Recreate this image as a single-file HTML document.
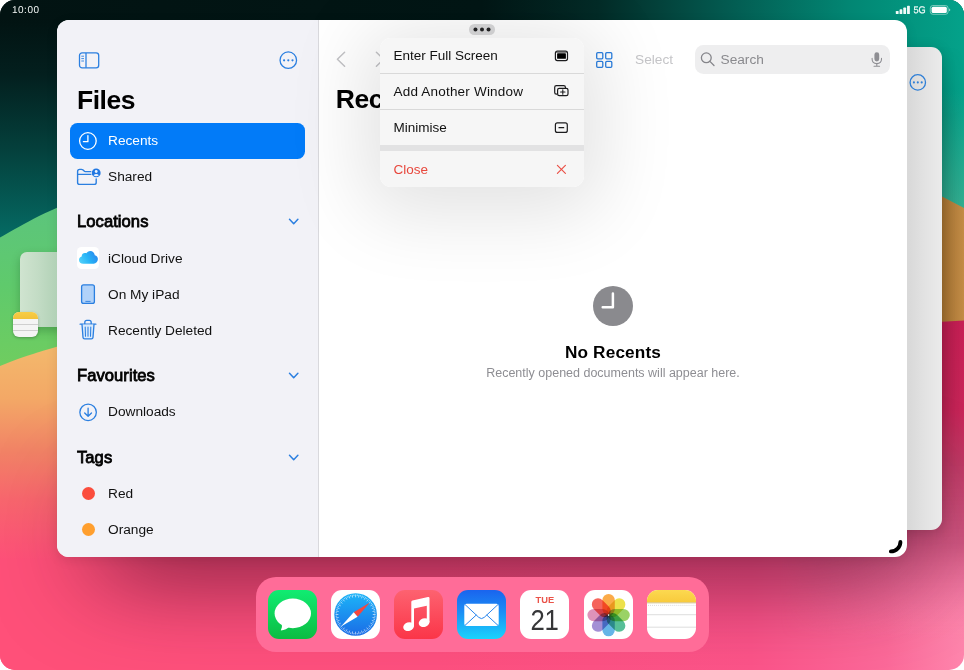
<!DOCTYPE html>
<html lang="en">
<head>
<meta charset="utf-8">
<title>Files</title>
<style>
html,body{margin:0;padding:0;background:#fff;}
body{width:964px;height:670px;overflow:hidden;font-family:"Liberation Sans",sans-serif;}
#screen{position:absolute;left:0;top:0;width:964px;height:670px;border-radius:15px;overflow:hidden;}
.abs{position:absolute;}
.t{position:absolute;white-space:nowrap;line-height:1;}
#wall{position:absolute;left:0;top:0;}
/* status */
#time{left:12.3px;top:4.8px;font-size:10px;color:#f2f6f5;letter-spacing:0.5px;transform:rotate(0.03deg);}
/* windows */
#backL{left:20px;top:252px;width:60px;height:75px;border-radius:7px 0 0 7px;background:linear-gradient(90deg,#d0e4d0 0px,#c3dcc5 18px,#b1d1b6 37px);box-shadow:0 4px 10px rgba(0,45,10,0.26);}
#backR{left:860px;top:46.5px;width:82px;height:483.5px;border-radius:11px;background:linear-gradient(90deg,#d6d6d6 0px,#d9d9d9 49px,#e2e2e2 64px,#ebebeb 82px);box-shadow:0 3px 14px rgba(0,0,0,0.18);}
#win{left:57px;top:19.5px;width:850px;height:537.5px;border-radius:12px;background:#fff;}
#winshadow{left:57px;top:19.5px;width:850px;height:537.5px;border-radius:12px;box-shadow:0 3px 12px rgba(30,0,15,0.10);}
#winclip{position:absolute;left:0;top:0;width:100%;height:100%;border-radius:12px;overflow:hidden;}
#side{left:0;top:0;width:261px;height:100%;background:#f2f2f7;}
#sep{left:261px;top:0;width:1px;height:100%;background:#d9d9dd;}
.row{position:absolute;left:51px;font-size:13.7px;color:#111;white-space:nowrap;line-height:1;}
.hd{position:absolute;left:20px;font-size:16.6px;font-weight:normal;color:#000;-webkit-text-stroke:0.8px #000;white-space:nowrap;line-height:1;letter-spacing:0.05px;}
/* menu */
#menu{left:323px;top:18.05px;width:204px;height:149px;border-radius:11px;background:#f6f6f6;overflow:hidden;}
#menushadow{left:323px;top:18.05px;width:204px;height:149px;border-radius:11px;box-shadow:0 10px 78px 16px rgba(0,0,0,0.118);}
.mi{position:absolute;left:13.5px;font-size:13.5px;color:#111;white-space:nowrap;line-height:1;}
.ml{position:absolute;left:0;width:204px;height:1px;background:#d9d9d9;}
/* dock */
#dock{left:255.8px;top:577px;width:452.8px;height:75.2px;border-radius:20px;background:#ff6c98;}
.ic{position:absolute;top:590.5px;width:48.5px;height:48.5px;border-radius:11px;overflow:hidden;}
</style>
</head>
<body>
<div id="screen">
<!-- WALLPAPER -->
<svg id="wall" width="964" height="670" viewBox="0 0 964 670">
<defs>
<linearGradient id="gTop" gradientUnits="userSpaceOnUse" x1="0" y1="0" x2="964" y2="0">
<stop offset="0" stop-color="#021312"/><stop offset="0.5" stop-color="#021615"/><stop offset="0.62" stop-color="#032b27"/><stop offset="0.75" stop-color="#03594f"/><stop offset="0.88" stop-color="#028673"/><stop offset="0.913" stop-color="#028e79"/><stop offset="1" stop-color="#04a28a"/>
</linearGradient>
<linearGradient id="gLeft" gradientUnits="userSpaceOnUse" x1="0" y1="19" x2="0" y2="240">
<stop offset="0" stop-color="#021312"/><stop offset="0.25" stop-color="#031f1e"/><stop offset="0.6" stop-color="#04413d"/><stop offset="1" stop-color="#056c65"/>
</linearGradient>
<linearGradient id="gGreen" gradientUnits="userSpaceOnUse" x1="0" y1="200" x2="0" y2="370">
<stop offset="0" stop-color="#5cc47e"/><stop offset="0.5" stop-color="#5fca6c"/><stop offset="1" stop-color="#70cd5f"/>
</linearGradient>
<linearGradient id="gOrange" gradientUnits="userSpaceOnUse" x1="0" y1="345" x2="0" y2="560">
<stop offset="0" stop-color="#f3b96c"/><stop offset="0.25" stop-color="#f3a866"/><stop offset="0.5" stop-color="#f28266"/><stop offset="0.72" stop-color="#f9666e"/><stop offset="1" stop-color="#ff5079"/>
</linearGradient>
<linearGradient id="gBottom" gradientUnits="userSpaceOnUse" x1="0" y1="0" x2="964" y2="0">
<stop offset="0" stop-color="#ff5079"/><stop offset="0.45" stop-color="#ff5080"/><stop offset="0.78" stop-color="#fd548a"/><stop offset="0.92" stop-color="#fd6a9a"/><stop offset="1" stop-color="#ff86ad"/>
</linearGradient>
<linearGradient id="gRightO" gradientUnits="userSpaceOnUse" x1="907" y1="0" x2="964" y2="0">
<stop offset="0" stop-color="#a56e30"/><stop offset="0.6" stop-color="#b57d36"/><stop offset="1" stop-color="#c48d47"/>
</linearGradient>
<linearGradient id="gRightC" gradientUnits="userSpaceOnUse" x1="0" y1="320" x2="0" y2="640">
<stop offset="0" stop-color="#c81f55"/><stop offset="0.28" stop-color="#ca2559"/><stop offset="0.45" stop-color="#c03a66"/><stop offset="0.7" stop-color="#cf5580" stop-opacity="0.92"/><stop offset="0.85" stop-color="#e86c98" stop-opacity="0.5"/><stop offset="1" stop-color="#ff88ae" stop-opacity="0"/>
</linearGradient>
<linearGradient id="gRightT" gradientUnits="userSpaceOnUse" x1="880" y1="0" x2="964" y2="0">
<stop offset="0" stop-color="#028e79"/><stop offset="1" stop-color="#04a28a"/>
</linearGradient>
<linearGradient id="gRightT2" gradientUnits="userSpaceOnUse" x1="0" y1="90" x2="0" y2="212">
<stop offset="0" stop-color="#4fb796" stop-opacity="0"/><stop offset="1" stop-color="#4fb796" stop-opacity="0.650"/>
</linearGradient>
<linearGradient id="gRShade" gradientUnits="userSpaceOnUse" x1="936" y1="0" x2="964" y2="0">
<stop offset="0" stop-color="#000" stop-opacity="0.170"/><stop offset="1" stop-color="#000" stop-opacity="0"/>
</linearGradient>
<linearGradient id="mVg" gradientUnits="userSpaceOnUse" x1="0" y1="46" x2="0" y2="540">
<stop offset="0" stop-color="#fff" stop-opacity="0"/><stop offset="0.14" stop-color="#fff" stop-opacity="1"/><stop offset="0.7" stop-color="#fff" stop-opacity="1"/><stop offset="1" stop-color="#fff" stop-opacity="0"/>
</linearGradient>
<mask id="mV" maskUnits="userSpaceOnUse" x="890" y="0" width="80" height="560"><rect x="890" y="0" width="80" height="560" fill="url(#mVg)"/></mask>
<linearGradient id="mH" gradientUnits="userSpaceOnUse" x1="780" y1="0" x2="915" y2="0">
<stop offset="0" stop-color="#fff" stop-opacity="0"/><stop offset="1" stop-color="#fff" stop-opacity="1"/>
</linearGradient>
<mask id="mR" maskUnits="userSpaceOnUse" x="700" y="300" width="264" height="370"><rect x="700" y="300" width="264" height="370" fill="url(#mH)"/></mask>
</defs>
<rect x="0" y="0" width="964" height="336" fill="#021312"/>
<rect x="0" y="335" width="964" height="335" fill="url(#gBottom)"/>
<!-- right strip -->
<rect x="880" y="0" width="84" height="215" fill="url(#gRightT)"/>
<rect x="880" y="90" width="84" height="125" fill="url(#gRightT2)"/>
<path d="M880 166 L942 196.500 L964 208 L964 322 L880 326Z" fill="url(#gRightO)"/>
<g mask="url(#mR)"><path d="M700 336 L964 320.500 L964 670 L700 670Z" fill="url(#gRightC)"/></g>
<g mask="url(#mV)"><rect x="936" y="19" width="28" height="521" fill="url(#gRShade)"/></g>
<!-- top strip -->
<rect x="0" y="0" width="964" height="30" fill="url(#gTop)"/>
<!-- left strip -->
<rect x="0" y="19" width="90" height="240" fill="url(#gLeft)"/>
<path d="M0 237.500 C20 226.500 40 213 90 194.500 L90 380 L0 380Z" fill="url(#gGreen)"/>
<path d="M0 366 C20 358 38 351 90 338 L90 670 L0 670Z" fill="url(#gOrange)"/>
</svg>

<!-- STATUS BAR -->
<div class="t" id="time">10:00</div>
<svg class="abs" style="left:895px;top:3px" width="60" height="14" viewBox="0 0 60 14">
<g fill="#f2fbf9">
<rect x="0.800" y="7.900" width="2.800" height="3.200" rx="0.700"/>
<rect x="4.550" y="6.300" width="2.800" height="4.800" rx="0.700"/>
<rect x="8.300" y="4.600" width="2.800" height="6.500" rx="0.700"/>
<rect x="12.050" y="2.800" width="2.800" height="8.300" rx="0.700"/>
</g>
<text transform="translate(18.500 10.250) rotate(0.030) scale(0.920 1)" x="0" y="0" font-family="Liberation Sans, sans-serif" font-size="10" fill="#eefaf7" stroke="#eefaf7" stroke-width="0.250">5G</text>
<rect x="35.300" y="2.500" width="17.800" height="8.800" rx="2.600" fill="none" stroke="#bfe6de" stroke-width="0.800" opacity="0.75"/>
<rect x="36.600" y="3.800" width="15.200" height="6.200" rx="1.500" fill="#ffffff"/>
<path d="M54 5.600 q1.300 0.400 1.300 1.300 q0 0.900 -1.300 1.300z" fill="#bfe6de" opacity="0.75"/>
</svg>

<div class="abs" style="left:281.700px;top:-1500px;width:448.600px;height:70px;border-radius:20px;transform:scaleX(1.830);transform-origin:50% 50%;box-shadow:0 2000px 72px rgba(50,0,26,0.78);"></div>
<div class="abs" id="winshadow"></div>
<!-- BACK WINDOWS -->
<div class="abs" id="backL"></div>
<div class="abs" id="backR"></div>
<svg class="abs" style="left:908px;top:72px" width="20" height="20" viewBox="0 0 20 20">
<circle cx="9.800" cy="10.400" r="7.700" fill="none" stroke="#2f7fd6" stroke-width="1.300"/>
<circle cx="5.900" cy="10.400" r="1.050" fill="#2f7fd6"/><circle cx="9.800" cy="10.400" r="1.050" fill="#2f7fd6"/><circle cx="13.700" cy="10.400" r="1.050" fill="#2f7fd6"/>
</svg>
<!-- notes mini icon -->
<div class="abs" id="notesMini" style="left:13.300px;top:312.300px;width:24.700px;height:24.700px;border-radius:6px;overflow:hidden;background:#f4f4f4;box-shadow:0 1px 3px rgba(0,0,0,0.25);">
<div class="abs" style="left:0;top:0;width:25px;height:6.500px;background:linear-gradient(#f7cd46,#f2c23a);"></div>
<div class="abs" style="left:0;top:12px;width:25px;height:0.800px;background:#cfcfcf;"></div>
<div class="abs" style="left:0;top:17.500px;width:25px;height:0.800px;background:#cfcfcf;"></div>
</div>

<!-- MAIN WINDOW -->
<div class="abs" id="win">
<div id="winclip">
<div class="abs" id="side"></div>
<div class="abs" id="sep"></div>

<!-- toolbar icons -->
<svg class="abs" style="left:20px;top:30px" width="26" height="22" viewBox="0 0 26 22">
<rect x="2.500" y="2.900" width="19.200" height="14.900" rx="2.600" fill="none" stroke="#2b7fe0" stroke-width="1.300"/>
<line x1="9" y1="3" x2="9" y2="17.700" stroke="#2b7fe0" stroke-width="1.300"/>
<g stroke="#2b7fe0" stroke-width="0.900"><line x1="4.300" y1="6.200" x2="7" y2="6.200"/><line x1="4.300" y1="8.600" x2="7" y2="8.600"/><line x1="4.300" y1="11" x2="7" y2="11"/></g>
</svg>
<svg class="abs" style="left:221px;top:30px" width="22" height="22" viewBox="0 0 22 22">
<circle cx="10.300" cy="10.200" r="8.250" fill="none" stroke="#2b7fe0" stroke-width="1.300"/>
<circle cx="6.100" cy="10.300" r="1.100" fill="#2b7fe0"/><circle cx="10.300" cy="10.300" r="1.100" fill="#2b7fe0"/><circle cx="14.500" cy="10.300" r="1.100" fill="#2b7fe0"/>
</svg>
<div class="t" style="left:20px;top:67px;font-size:26.500px;font-weight:bold;color:#000;letter-spacing:-0.500px;">Files</div>
<!-- selected row -->
<div class="abs" style="left:13px;top:103px;width:235.100px;height:36px;border-radius:7.500px;background:#027bf8;"></div>
<svg class="abs" style="left:20px;top:111px" width="22" height="22" viewBox="0 0 22 22">
<circle cx="10.900" cy="10" r="8.300" fill="none" stroke="#fff" stroke-width="1.300"/>
<path d="M10.900 4.600 V10.700 H6.400" fill="none" stroke="#fff" stroke-width="1.300" stroke-linecap="round" stroke-linejoin="round"/>
</svg>
<div class="row" style="top:114.4px;color:#fff;">Recents</div>
<!-- shared -->
<svg class="abs" style="left:18px;top:146.500px" width="28" height="22" viewBox="0 0 28 22">
<g fill="none" stroke="#2b7fe0" stroke-width="1.400" stroke-linejoin="round" stroke-linecap="round">
<path d="M15.800 5.600 H10.300 Q9.600 5.600 9.100 5.100 L8.100 4.100 Q7.400 3.400 6.400 3.400 H4.600 Q2.600 3.400 2.600 5.400 V16.400 Q2.600 18.400 4.600 18.400 H19.200 Q21.200 18.400 21.200 16.400 V13"/>
<line x1="2.800" y1="8.400" x2="15.800" y2="8.400"/>
</g>
<circle cx="21.200" cy="6.900" r="4.450" fill="#2278e2"/>
<circle cx="21.200" cy="5.500" r="1.400" fill="#eef4fd"/>
<path d="M18.500 9.300 Q21.200 6.500 23.900 9.300 Q21.200 11.400 18.500 9.300Z" fill="#eef4fd"/>
</svg>
<div class="row" style="top:150.4px;">Shared</div>
<!-- Locations -->
<div class="hd" style="top:194px;">Locations</div>
<svg class="abs chev" style="left:230px;top:196.6px" width="14" height="12" viewBox="0 0 14 12"><path d="M2.500 3.300 L6.700 7.700 L10.900 3.300" fill="none" stroke="#2b7fe0" stroke-width="1.500" stroke-linecap="round" stroke-linejoin="round"/></svg>
<!-- iCloud -->
<div class="abs" style="left:20px;top:227.400px;width:22.300px;height:22.300px;border-radius:4.500px;background:#fff;"></div>
<svg class="abs" style="left:20px;top:227.500px" width="23" height="23" viewBox="0 0 23 23">
<defs><linearGradient id="gCloud" x1="0" y1="0.7" x2="1" y2="0.3"><stop offset="0" stop-color="#4fcffa"/><stop offset="0.45" stop-color="#27b4f6"/><stop offset="1" stop-color="#2a86ee"/></linearGradient></defs>
<path d="M6.200 16.700 C3.700 16.700 2 15.100 2 13 C2 11.300 3.100 9.900 4.700 9.500 C4.600 7.500 6.100 6 7.900 6 C8.400 6 8.900 6.100 9.300 6.300 C10.100 4.800 11.600 3.900 13.200 3.900 C15.700 3.900 17.600 5.800 17.800 8.300 C19.600 8.500 20.900 10.100 20.900 12.100 C20.900 14.700 19 16.700 16.700 16.700 Z" fill="url(#gCloud)"/>
</svg>
<div class="row" style="top:232.6px;">iCloud Drive</div>
<!-- iPad -->
<svg class="abs" style="left:20px;top:262px" width="22" height="26" viewBox="0 0 22 26">
<rect x="4.600" y="2.800" width="12.800" height="18.600" rx="2" fill="#b1d2f9" stroke="#2b7fe0" stroke-width="1.300"/>
<line x1="8.800" y1="19.400" x2="13.200" y2="19.400" stroke="#2b7fe0" stroke-width="0.900" stroke-linecap="round"/>
</svg>
<div class="row" style="top:268.6px;">On My iPad</div>
<!-- trash -->
<svg class="abs" style="left:20px;top:297.400px" width="22" height="26" viewBox="0 0 22 26">
<g fill="none" stroke="#2b7fe0" stroke-width="1.300" stroke-linecap="round" stroke-linejoin="round">
<line x1="3.100" y1="7.200" x2="18.900" y2="7.200"/>
<path d="M7.800 7 V5.400 Q7.800 3.400 9.800 3.400 H12.200 Q14.200 3.400 14.200 5.400 V7"/>
<path d="M5 7.400 L6 20.400 Q6.100 21.900 7.600 21.900 H14.400 Q15.900 21.900 16 20.400 L17 7.400" fill="#d9eafc"/>
</g>
<g fill="none" stroke="#2b7fe0" stroke-width="1.050" stroke-linecap="round">
<line x1="11" y1="10" x2="11" y2="19.300"/><line x1="8.200" y1="10" x2="8.500" y2="19.300"/><line x1="13.800" y1="10" x2="13.500" y2="19.300"/>
</g>
</svg>
<div class="row" style="top:304.6px;">Recently Deleted</div>
<!-- Favourites -->
<div class="hd" style="top:348px;">Favourites</div>
<svg class="abs chev" style="left:230px;top:350.6px" width="14" height="12" viewBox="0 0 14 12"><path d="M2.500 3.300 L6.700 7.700 L10.900 3.300" fill="none" stroke="#2b7fe0" stroke-width="1.500" stroke-linecap="round" stroke-linejoin="round"/></svg>
<svg class="abs" style="left:20px;top:382px" width="22" height="22" viewBox="0 0 22 22">
<circle cx="11.100" cy="10.300" r="8.250" fill="none" stroke="#2b7fe0" stroke-width="1.300"/>
<path d="M11.100 6.200 V14 M7.700 11 L11.100 14.300 L14.500 11" fill="none" stroke="#2b7fe0" stroke-width="1.300" stroke-linecap="round" stroke-linejoin="round"/>
</svg>
<div class="row" style="top:385.4px;">Downloads</div>
<!-- Tags -->
<div class="hd" style="top:430px;">Tags</div>
<svg class="abs chev" style="left:230px;top:432.6px" width="14" height="12" viewBox="0 0 14 12"><path d="M2.500 3.300 L6.700 7.700 L10.900 3.300" fill="none" stroke="#2b7fe0" stroke-width="1.500" stroke-linecap="round" stroke-linejoin="round"/></svg>
<div class="abs" style="left:24.700px;top:467.300px;width:13.400px;height:13.400px;border-radius:50%;background:#fb4d3d;"></div>
<div class="row" style="top:467.4px;">Red</div>
<div class="abs" style="left:24.700px;top:503.100px;width:13.400px;height:13.400px;border-radius:50%;background:#ff9f2e;"></div>
<div class="row" style="top:503.4px;">Orange</div>


<!-- content toolbar -->
<svg class="abs" style="left:276px;top:29.500px" width="60" height="22" viewBox="0 0 60 22">
<path d="M11.600 3.200 L4.400 10.200 L11.600 17.200" fill="none" stroke="#c3c3c6" stroke-width="1.500" stroke-linecap="round" stroke-linejoin="round"/>
<path d="M43.400 3.200 L50.600 10.200 L43.400 17.200" fill="none" stroke="#c3c3c6" stroke-width="1.500" stroke-linecap="round" stroke-linejoin="round"/>
</svg>
<div class="t" style="left:278.800px;top:66.700px;font-size:26.500px;font-weight:bold;color:#000;letter-spacing:-0.500px;">Recents</div>
<svg class="abs" style="left:536px;top:30px" width="24" height="22" viewBox="0 0 24 22">
<g fill="none" stroke="#2b7fe0" stroke-width="1.300">
<rect x="3.700" y="2.700" width="6.100" height="6.100" rx="1.100"/><rect x="12.700" y="2.700" width="6.100" height="6.100" rx="1.100"/>
<rect x="3.700" y="11.300" width="6.100" height="6.100" rx="1.100"/><rect x="12.700" y="11.300" width="6.100" height="6.100" rx="1.100"/>
</g></svg>
<div class="t" style="left:578px;top:33.500px;font-size:13.700px;color:#c5c5c8;">Select</div>
<div class="abs" style="left:637.500px;top:25.500px;width:195.500px;height:29px;border-radius:8.500px;background:#eeeeef;"></div>
<svg class="abs" style="left:642px;top:30.600px" width="18" height="18" viewBox="0 0 18 18">
<circle cx="7.300" cy="7.800" r="4.900" fill="none" stroke="#85858a" stroke-width="1.300"/>
<line x1="10.900" y1="11.400" x2="15" y2="15.500" stroke="#85858a" stroke-width="1.300" stroke-linecap="round"/>
</svg>
<div class="t" style="left:663.500px;top:33.500px;font-size:13.700px;color:#8a8a8e;">Search</div>
<svg class="abs" style="left:812.300px;top:30.400px" width="16" height="20" viewBox="0 0 16 20">
<rect x="5.400" y="2.300" width="4.800" height="9.200" rx="2.400" fill="#8e8e93"/>
<path d="M3.100 8.200 V9 Q3.100 13.600 7.800 13.600 Q12.500 13.600 12.500 9 V8.200" fill="none" stroke="#8e8e93" stroke-width="1.050" stroke-linecap="round"/>
<path d="M7.800 13.700 V16.200 M5 16.300 H10.600" fill="none" stroke="#8e8e93" stroke-width="1.050" stroke-linecap="round"/>
</svg>
<!-- empty state -->
<svg class="abs" style="left:534px;top:264px" width="44" height="44" viewBox="0 0 44 44">
<circle cx="22" cy="22" r="20" fill="#8a8a8e"/>
<path d="M21.900 9.400 V23.200 H11.700" fill="none" stroke="#fff" stroke-width="2.500" stroke-linecap="round" stroke-linejoin="round"/>
</svg>
<div class="t" style="left:456px;width:200px;text-align:center;top:324px;font-size:17.200px;font-weight:bold;color:#000;letter-spacing:0.150px;">No Recents</div>
<div class="t" style="left:356px;width:400px;text-align:center;top:347.200px;font-size:12.500px;color:#8e8e93;letter-spacing:0px;">Recently opened documents will appear here.</div>
<!-- resize handle -->
<svg class="abs" style="left:826px;top:514px" width="24" height="24" viewBox="0 0 24 24">
<path d="M17.400 7.900 A9.500 9.500 0 0 1 7.900 17.400" fill="none" stroke="#000" stroke-width="3.900" stroke-linecap="round"/>
</svg>

</div>

<!-- grabber pill -->
<div class="abs" style="left:412px;top:4.500px;width:26px;height:10.500px;border-radius:5.300px;background:#dadadb;"></div>
<svg class="abs" style="left:412px;top:4.500px" width="26" height="11" viewBox="0 0 26 11">
<circle cx="6.450" cy="5.400" r="2" fill="#232325"/><circle cx="13" cy="5.400" r="2" fill="#232325"/><circle cx="19.550" cy="5.400" r="2" fill="#232325"/>
</svg>
<div class="abs" id="menushadow"></div>
<div class="abs" id="menu">
<div class="mi" style="top:11.400px;">Enter Full Screen</div>
<div class="ml" style="top:35.500px;"></div>
<div class="mi" style="top:47.400px;letter-spacing:0.200px;">Add Another Window</div>
<div class="ml" style="top:71.500px;"></div>
<div class="mi" style="top:83.400px;">Minimise</div>
<div class="abs" style="left:0;top:107.400px;width:204px;height:6.400px;background:#e2e2e3;"></div>
<div class="mi" style="top:125px;color:#e8483d;">Close</div>
<!-- icons -->
<svg class="abs" style="left:170px;top:8px" width="22" height="20" viewBox="0 0 22 20">
<rect x="5.400" y="5.200" width="12.100" height="9.400" rx="2" fill="none" stroke="#1c1c1e" stroke-width="1.200"/>
<rect x="7.100" y="7.300" width="8.800" height="5.500" rx="0.600" fill="#000"/>
<rect x="6" y="5.800" width="10.900" height="1.100" fill="#555" opacity="0.800"/>
</svg>
<svg class="abs" style="left:170px;top:43.400px" width="22" height="20" viewBox="0 0 22 20">
<g fill="none" stroke="#1c1c1e" stroke-width="1.200" stroke-linejoin="round">
<path d="M7.200 13.200 H6.400 Q4.700 13.200 4.700 11.500 V6.300 Q4.700 4.600 6.400 4.600 H13.700 Q15.400 4.600 15.400 6.300 V6.900"/>
<rect x="7.600" y="7.300" width="10.400" height="7.400" rx="1.700"/>
<path d="M12.800 8.800 V13.200 M10.600 11 H15" stroke-linecap="round" stroke-width="1.100"/>
</g></svg>
<svg class="abs" style="left:170px;top:80px" width="22" height="20" viewBox="0 0 22 20">
<rect x="5.400" y="4.900" width="11.900" height="9.500" rx="2" fill="none" stroke="#1c1c1e" stroke-width="1.200"/>
<line x1="9" y1="9.650" x2="13.700" y2="9.650" stroke="#1c1c1e" stroke-width="1.200" stroke-linecap="round"/>
</svg>
<svg class="abs" style="left:170px;top:121px" width="22" height="20" viewBox="0 0 22 20">
<path d="M7.400 6.300 L15.400 14.300 M15.400 6.300 L7.400 14.300" fill="none" stroke="#ea4f45" stroke-width="1.150" stroke-linecap="round"/>
</svg>
</div>

</div>

<!-- DOCK -->
<div class="abs" id="dock"></div>
<div class="ic" style="left:268.40px;top:590px;width:49px;height:49px;background:linear-gradient(#10ec72,#0cbc42);">
<svg class="abs" style="left:0;top:0" width="49" height="49" viewBox="0 0 49 49">
<ellipse cx="24.800" cy="23.400" rx="18.200" ry="14.800" fill="#fff"/>
<path d="M13.800 33.500 Q14.600 37.800 12.800 40.500 Q18.400 40.200 21.500 36.600 Z" fill="#fff"/>
</svg></div>
<div class="ic" style="left:331.42px;top:590px;width:49px;height:49px;background:#fff;">
<svg class="abs" style="left:0;top:0" width="49" height="49" viewBox="0 0 49 49">
<defs><linearGradient id="gSaf" x1="0" y1="0" x2="0" y2="1"><stop offset="0" stop-color="#1cb4f8"/><stop offset="1" stop-color="#1b6ce6"/></linearGradient></defs>
<circle cx="24.600" cy="24.500" r="21.300" fill="url(#gSaf)"/>
<g stroke="#fff" stroke-width="0.650" opacity="0.950"><line x1="24.60" y1="4.50" x2="24.60" y2="7.30"/><line x1="26.34" y1="4.58" x2="26.22" y2="5.97"/><line x1="28.07" y1="4.80" x2="27.59" y2="7.56"/><line x1="29.78" y1="5.18" x2="29.41" y2="6.53"/><line x1="31.44" y1="5.71" x2="30.48" y2="8.34"/><line x1="33.05" y1="6.37" x2="32.46" y2="7.64"/><line x1="34.60" y1="7.18" x2="33.20" y2="9.60"/><line x1="36.07" y1="8.12" x2="35.27" y2="9.26"/><line x1="37.46" y1="9.18" x2="35.66" y2="11.32"/><line x1="38.74" y1="10.36" x2="37.75" y2="11.35"/><line x1="39.92" y1="11.64" x2="37.78" y2="13.44"/><line x1="40.98" y1="13.03" x2="39.84" y2="13.83"/><line x1="41.92" y1="14.50" x2="39.50" y2="15.90"/><line x1="42.73" y1="16.05" x2="41.46" y2="16.64"/><line x1="43.39" y1="17.66" x2="40.76" y2="18.62"/><line x1="43.92" y1="19.32" x2="42.57" y2="19.69"/><line x1="44.30" y1="21.03" x2="41.54" y2="21.51"/><line x1="44.52" y1="22.76" x2="43.13" y2="22.88"/><line x1="44.60" y1="24.50" x2="41.80" y2="24.50"/><line x1="44.52" y1="26.24" x2="43.13" y2="26.12"/><line x1="44.30" y1="27.97" x2="41.54" y2="27.49"/><line x1="43.92" y1="29.68" x2="42.57" y2="29.31"/><line x1="43.39" y1="31.34" x2="40.76" y2="30.38"/><line x1="42.73" y1="32.95" x2="41.46" y2="32.36"/><line x1="41.92" y1="34.50" x2="39.50" y2="33.10"/><line x1="40.98" y1="35.97" x2="39.84" y2="35.17"/><line x1="39.92" y1="37.36" x2="37.78" y2="35.56"/><line x1="38.74" y1="38.64" x2="37.75" y2="37.65"/><line x1="37.46" y1="39.82" x2="35.66" y2="37.68"/><line x1="36.07" y1="40.88" x2="35.27" y2="39.74"/><line x1="34.60" y1="41.82" x2="33.20" y2="39.40"/><line x1="33.05" y1="42.63" x2="32.46" y2="41.36"/><line x1="31.44" y1="43.29" x2="30.48" y2="40.66"/><line x1="29.78" y1="43.82" x2="29.41" y2="42.47"/><line x1="28.07" y1="44.20" x2="27.59" y2="41.44"/><line x1="26.34" y1="44.42" x2="26.22" y2="43.03"/><line x1="24.60" y1="44.50" x2="24.60" y2="41.70"/><line x1="22.86" y1="44.42" x2="22.98" y2="43.03"/><line x1="21.13" y1="44.20" x2="21.61" y2="41.44"/><line x1="19.42" y1="43.82" x2="19.79" y2="42.47"/><line x1="17.76" y1="43.29" x2="18.72" y2="40.66"/><line x1="16.15" y1="42.63" x2="16.74" y2="41.36"/><line x1="14.60" y1="41.82" x2="16.00" y2="39.40"/><line x1="13.13" y1="40.88" x2="13.93" y2="39.74"/><line x1="11.74" y1="39.82" x2="13.54" y2="37.68"/><line x1="10.46" y1="38.64" x2="11.45" y2="37.65"/><line x1="9.28" y1="37.36" x2="11.42" y2="35.56"/><line x1="8.22" y1="35.97" x2="9.36" y2="35.17"/><line x1="7.28" y1="34.50" x2="9.70" y2="33.10"/><line x1="6.47" y1="32.95" x2="7.74" y2="32.36"/><line x1="5.81" y1="31.34" x2="8.44" y2="30.38"/><line x1="5.28" y1="29.68" x2="6.63" y2="29.31"/><line x1="4.90" y1="27.97" x2="7.66" y2="27.49"/><line x1="4.68" y1="26.24" x2="6.07" y2="26.12"/><line x1="4.60" y1="24.50" x2="7.40" y2="24.50"/><line x1="4.68" y1="22.76" x2="6.07" y2="22.88"/><line x1="4.90" y1="21.03" x2="7.66" y2="21.51"/><line x1="5.28" y1="19.32" x2="6.63" y2="19.69"/><line x1="5.81" y1="17.66" x2="8.44" y2="18.62"/><line x1="6.47" y1="16.05" x2="7.74" y2="16.64"/><line x1="7.28" y1="14.50" x2="9.70" y2="15.90"/><line x1="8.22" y1="13.03" x2="9.36" y2="13.83"/><line x1="9.28" y1="11.64" x2="11.42" y2="13.44"/><line x1="10.46" y1="10.36" x2="11.45" y2="11.35"/><line x1="11.74" y1="9.18" x2="13.54" y2="11.32"/><line x1="13.13" y1="8.12" x2="13.93" y2="9.26"/><line x1="14.60" y1="7.18" x2="16.00" y2="9.60"/><line x1="16.15" y1="6.37" x2="16.74" y2="7.64"/><line x1="17.76" y1="5.71" x2="18.72" y2="8.34"/><line x1="19.42" y1="5.18" x2="19.79" y2="6.53"/><line x1="21.13" y1="4.80" x2="21.61" y2="7.56"/><line x1="22.86" y1="4.58" x2="22.98" y2="5.97"/></g>
<path d="M38.900 12.500 L22.700 22.300 L26.600 26.800 Z" fill="#f4473f"/>
<path d="M10 36.600 L22.700 22.300 L26.600 26.800 Z" fill="#fff"/>
</svg></div>
<div class="ic" style="left:394.44px;top:590px;width:49px;height:49px;background:linear-gradient(#fd6270,#fb3548);">
<svg class="abs" style="left:0;top:0" width="49" height="49" viewBox="0 0 49 49">
<path d="M17.300 11.900 Q17.300 10.700 18.500 10.400 L34 7.100 Q35.500 6.800 35.500 8.300 V32.200 H32.800 V15.700 L20 18.500 V36.200 H17.300 Z" fill="#fff"/>
<ellipse cx="14.600" cy="36.600" rx="5.500" ry="4.300" transform="rotate(-18 14.600 36.600)" fill="#fff"/>
<ellipse cx="30.100" cy="32.600" rx="5.500" ry="4.300" transform="rotate(-18 30.100 32.600)" fill="#fff"/>
</svg></div>
<div class="ic" style="left:457.46px;top:590px;width:49px;height:49px;background:linear-gradient(#1a64ee 0%,#1b8ef5 45%,#19d4fc 100%);">
<svg class="abs" style="left:0;top:0" width="49" height="49" viewBox="0 0 49 49">
<rect x="7.300" y="13.700" width="34.400" height="22.400" rx="2.300" fill="#fff"/>
<path d="M8 14.500 L21.800 27.400 Q24.500 29.800 27.200 27.400 L41 14.500" fill="none" stroke="#2a86ee" stroke-width="1"/>
<path d="M8 35.400 L19.400 24.900 M41 35.400 L29.600 24.900" fill="none" stroke="#2a86ee" stroke-width="1"/>
</svg></div>
<div class="ic" style="left:520.48px;top:590px;width:49px;height:49px;background:#fff;">
<div class="t" style="left:0;width:49px;text-align:center;top:5.800px;font-size:9.300px;font-weight:bold;color:#ea5349;letter-spacing:0.100px;">TUE</div>
<div class="t" style="left:-10px;width:69px;text-align:center;top:14.700px;font-size:30.300px;color:#363638;transform:scaleX(0.850);letter-spacing:-0.500px;">21</div>
</div>
<div class="ic" style="left:583.50px;top:590px;width:49px;height:49px;background:#fff;">
<svg class="abs" style="left:0;top:0" width="49" height="49" viewBox="0 0 49 49">
<g style="isolation:isolate" opacity="0.930"><rect style="mix-blend-mode:multiply" transform="rotate(0 24.6 25.1)" x="18.40" y="3.90" width="12.400" height="21.600" rx="6.200" ry="6.400" fill="#fba53c"/><rect style="mix-blend-mode:multiply" transform="rotate(45 24.6 25.1)" x="18.40" y="3.90" width="12.400" height="21.600" rx="6.200" ry="6.400" fill="#ecdf3e"/><rect style="mix-blend-mode:multiply" transform="rotate(90 24.6 25.1)" x="18.40" y="3.90" width="12.400" height="21.600" rx="6.200" ry="6.400" fill="#93cf5a"/><rect style="mix-blend-mode:multiply" transform="rotate(135 24.6 25.1)" x="18.40" y="3.90" width="12.400" height="21.600" rx="6.200" ry="6.400" fill="#4bbb91"/><rect style="mix-blend-mode:multiply" transform="rotate(180 24.6 25.1)" x="18.40" y="3.90" width="12.400" height="21.600" rx="6.200" ry="6.400" fill="#5bb0e6"/><rect style="mix-blend-mode:multiply" transform="rotate(225 24.6 25.1)" x="18.40" y="3.90" width="12.400" height="21.600" rx="6.200" ry="6.400" fill="#9d88d2"/><rect style="mix-blend-mode:multiply" transform="rotate(270 24.6 25.1)" x="18.40" y="3.90" width="12.400" height="21.600" rx="6.200" ry="6.400" fill="#dc8ab4"/><rect style="mix-blend-mode:multiply" transform="rotate(315 24.6 25.1)" x="18.40" y="3.90" width="12.400" height="21.600" rx="6.200" ry="6.400" fill="#f55a50"/></g>
<circle cx="24.600" cy="25.100" r="0.800" fill="#fff"/>
</svg></div>
<div class="ic" style="left:646.52px;top:590px;width:49px;height:49px;background:#fff;">
<svg class="abs" style="left:0;top:0" width="49" height="49" viewBox="0 0 49 49">
<defs><linearGradient id="gNote" x1="0" y1="0" x2="0" y2="1"><stop offset="0" stop-color="#fcd950"/><stop offset="1" stop-color="#f8ca3c"/></linearGradient></defs>
<rect x="0" y="0" width="49" height="12.400" fill="url(#gNote)"/>
<rect x="0" y="12.400" width="49" height="0.900" fill="#cdb877"/>
<g fill="#b9b9b9"><circle cx="1.60" cy="15.300" r="0.450"/><circle cx="3.62" cy="15.300" r="0.450"/><circle cx="5.64" cy="15.300" r="0.450"/><circle cx="7.66" cy="15.300" r="0.450"/><circle cx="9.68" cy="15.300" r="0.450"/><circle cx="11.70" cy="15.300" r="0.450"/><circle cx="13.72" cy="15.300" r="0.450"/><circle cx="15.74" cy="15.300" r="0.450"/><circle cx="17.76" cy="15.300" r="0.450"/><circle cx="19.78" cy="15.300" r="0.450"/><circle cx="21.80" cy="15.300" r="0.450"/><circle cx="23.82" cy="15.300" r="0.450"/><circle cx="25.84" cy="15.300" r="0.450"/><circle cx="27.86" cy="15.300" r="0.450"/><circle cx="29.88" cy="15.300" r="0.450"/><circle cx="31.90" cy="15.300" r="0.450"/><circle cx="33.92" cy="15.300" r="0.450"/><circle cx="35.94" cy="15.300" r="0.450"/><circle cx="37.96" cy="15.300" r="0.450"/><circle cx="39.98" cy="15.300" r="0.450"/><circle cx="42.00" cy="15.300" r="0.450"/><circle cx="44.02" cy="15.300" r="0.450"/><circle cx="46.04" cy="15.300" r="0.450"/><circle cx="48.06" cy="15.300" r="0.450"/></g>
<rect x="0" y="24.300" width="49" height="0.900" fill="#d9d9d9"/>
<rect x="0" y="36.700" width="49" height="0.900" fill="#d9d9d9"/>
</svg></div>
</div>
</body>
</html>
